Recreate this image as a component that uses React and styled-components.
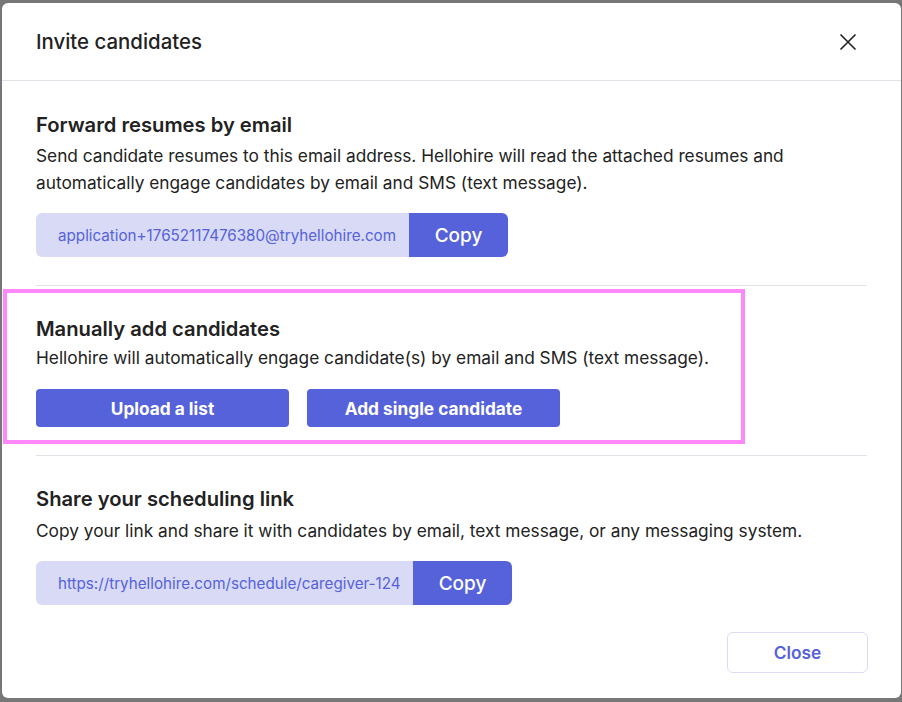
import React from 'react';
import styled, { createGlobalStyle } from 'styled-components';

const GlobalStyle = createGlobalStyle`
  html, body {
    margin: 0;
    padding: 0;
    background: #777777;
    font-family: Inter, "Noto Sans", sans-serif;
  }
`;

const Backdrop = styled.div`
  width: 902px;
  height: 702px;
  padding: 3px 0 0 2px;
  box-sizing: border-box;
  overflow: hidden;
`;

const Dialog = styled.div`
  width: 899px;
  height: 695px;
  background: #fff;
  border-radius: 6px;
  display: flex;
  flex-direction: column;
  color: #222;
`;

const Header = styled.div`
  height: 77px;
  border-bottom: 1px solid #e2e2ea;
  display: flex;
  align-items: center;
  justify-content: space-between;
  padding: 0 44px 0 34px;
`;

const Title = styled.h2`
  margin: 0;
  font-size: 20.4px;
  font-weight: 500;
  color: #222;
`;

const CloseIcon = styled.button`
  border: none;
  background: none;
  padding: 0;
  width: 18px;
  height: 18px;
  display: flex;
  cursor: pointer;
`;

const Body = styled.div`
  padding: 30px 34px 0;
  flex: 1;
  display: flex;
  flex-direction: column;
`;

const Section = styled.section`
  position: relative;
  padding-bottom: 28px;
  border-bottom: ${p => (p.$last ? 'none' : '1px solid #e2e2ea')};
  margin-bottom: ${p => (p.$last ? '0' : '29px')};
`;

const Highlight = styled.div`
  position: absolute;
  left: -33px;
  top: -26px;
  width: 734px;
  height: 147px;
  border: 4px solid #ff88fb;
  pointer-events: none;
`;

const SectionTitle = styled.h3`
  margin: 0 0 ${p => p.$gap ?? 3}px;
  font-size: 20.2px;
  line-height: 28px;
  font-weight: 600;
  color: #222;
`;

const Text = styled.p`
  margin: 0 0 ${p => p.$gap ?? 17}px;
  font-size: 17.3px;
  line-height: 27px;
  color: #222;
`;

const CopyRow = styled.div`
  display: flex;
  height: 44px;
  width: ${p => p.$width}px;
`;

const CopyField = styled.div`
  flex: 1;
  background: #d8daf6;
  color: #5662d9;
  font-size: 15.2px;
  display: flex;
  align-items: center;
  padding-left: 22px;
  border-radius: 6px 0 0 6px;
  white-space: nowrap;
`;

const CopyButton = styled.button`
  width: 99px;
  border: none;
  background: #5662d9;
  color: #fff;
  font-family: inherit;
  font-size: 19px;
  font-weight: 500;
  border-radius: 0 6px 6px 0;
  cursor: pointer;
`;

const ButtonRow = styled.div`
  display: flex;
  gap: 18px;
`;

const PrimaryButton = styled.button`
  width: 253px;
  height: 38px;
  border: none;
  border-radius: 4px;
  background: #5662d9;
  color: #fff;
  font-family: inherit;
  font-size: 17.3px;
  font-weight: 700;
  cursor: pointer;
`;

const Footer = styled.div`
  display: flex;
  justify-content: flex-end;
  margin: -1px -1px 0 0;
`;

const GhostButton = styled.button`
  width: 141px;
  height: 41px;
  background: #fff;
  border: 1px solid #dcdcf0;
  border-radius: 6px;
  color: #5662d9;
  font-family: inherit;
  font-size: 17.3px;
  font-weight: 600;
  cursor: pointer;
`;

export default function App() {
  return (
    <Backdrop>
      <GlobalStyle />
      <Dialog>
        <Header>
          <Title>Invite candidates</Title>
          <CloseIcon aria-label="Close">
            <svg width="18" height="18" viewBox="0 0 18 18" fill="none">
              <path d="M1.5 1.5 L16.5 16.5 M16.5 1.5 L1.5 16.5" stroke="#222" strokeWidth="1.6" />
            </svg>
          </CloseIcon>
        </Header>
        <Body>
          <Section>
            <SectionTitle>Forward resumes by email</SectionTitle>
            <Text>
              Send candidate resumes to this email address. Hellohire will read the attached resumes and
              automatically engage candidates by email and SMS (text message).
            </Text>
            <CopyRow $width={472}>
              <CopyField>application+17652117476380@tryhellohire.com</CopyField>
              <CopyButton>Copy</CopyButton>
            </CopyRow>
          </Section>
          <Section>
            <Highlight />
            <SectionTitle $gap={1}>Manually add candidates</SectionTitle>
            <Text $gap={18}>Hellohire will automatically engage candidate(s) by email and SMS (text message).</Text>
            <ButtonRow>
              <PrimaryButton>Upload a list</PrimaryButton>
              <PrimaryButton>Add single candidate</PrimaryButton>
            </ButtonRow>
          </Section>
          <Section $last>
            <SectionTitle $gap={4}>Share your scheduling link</SectionTitle>
            <Text>Copy your link and share it with candidates by email, text message, or any messaging system.</Text>
            <CopyRow $width={476}>
              <CopyField>https://tryhellohire.com/schedule/caregiver-124</CopyField>
              <CopyButton>Copy</CopyButton>
            </CopyRow>
          </Section>
          <Footer>
            <GhostButton>Close</GhostButton>
          </Footer>
        </Body>
      </Dialog>
    </Backdrop>
  );
}
